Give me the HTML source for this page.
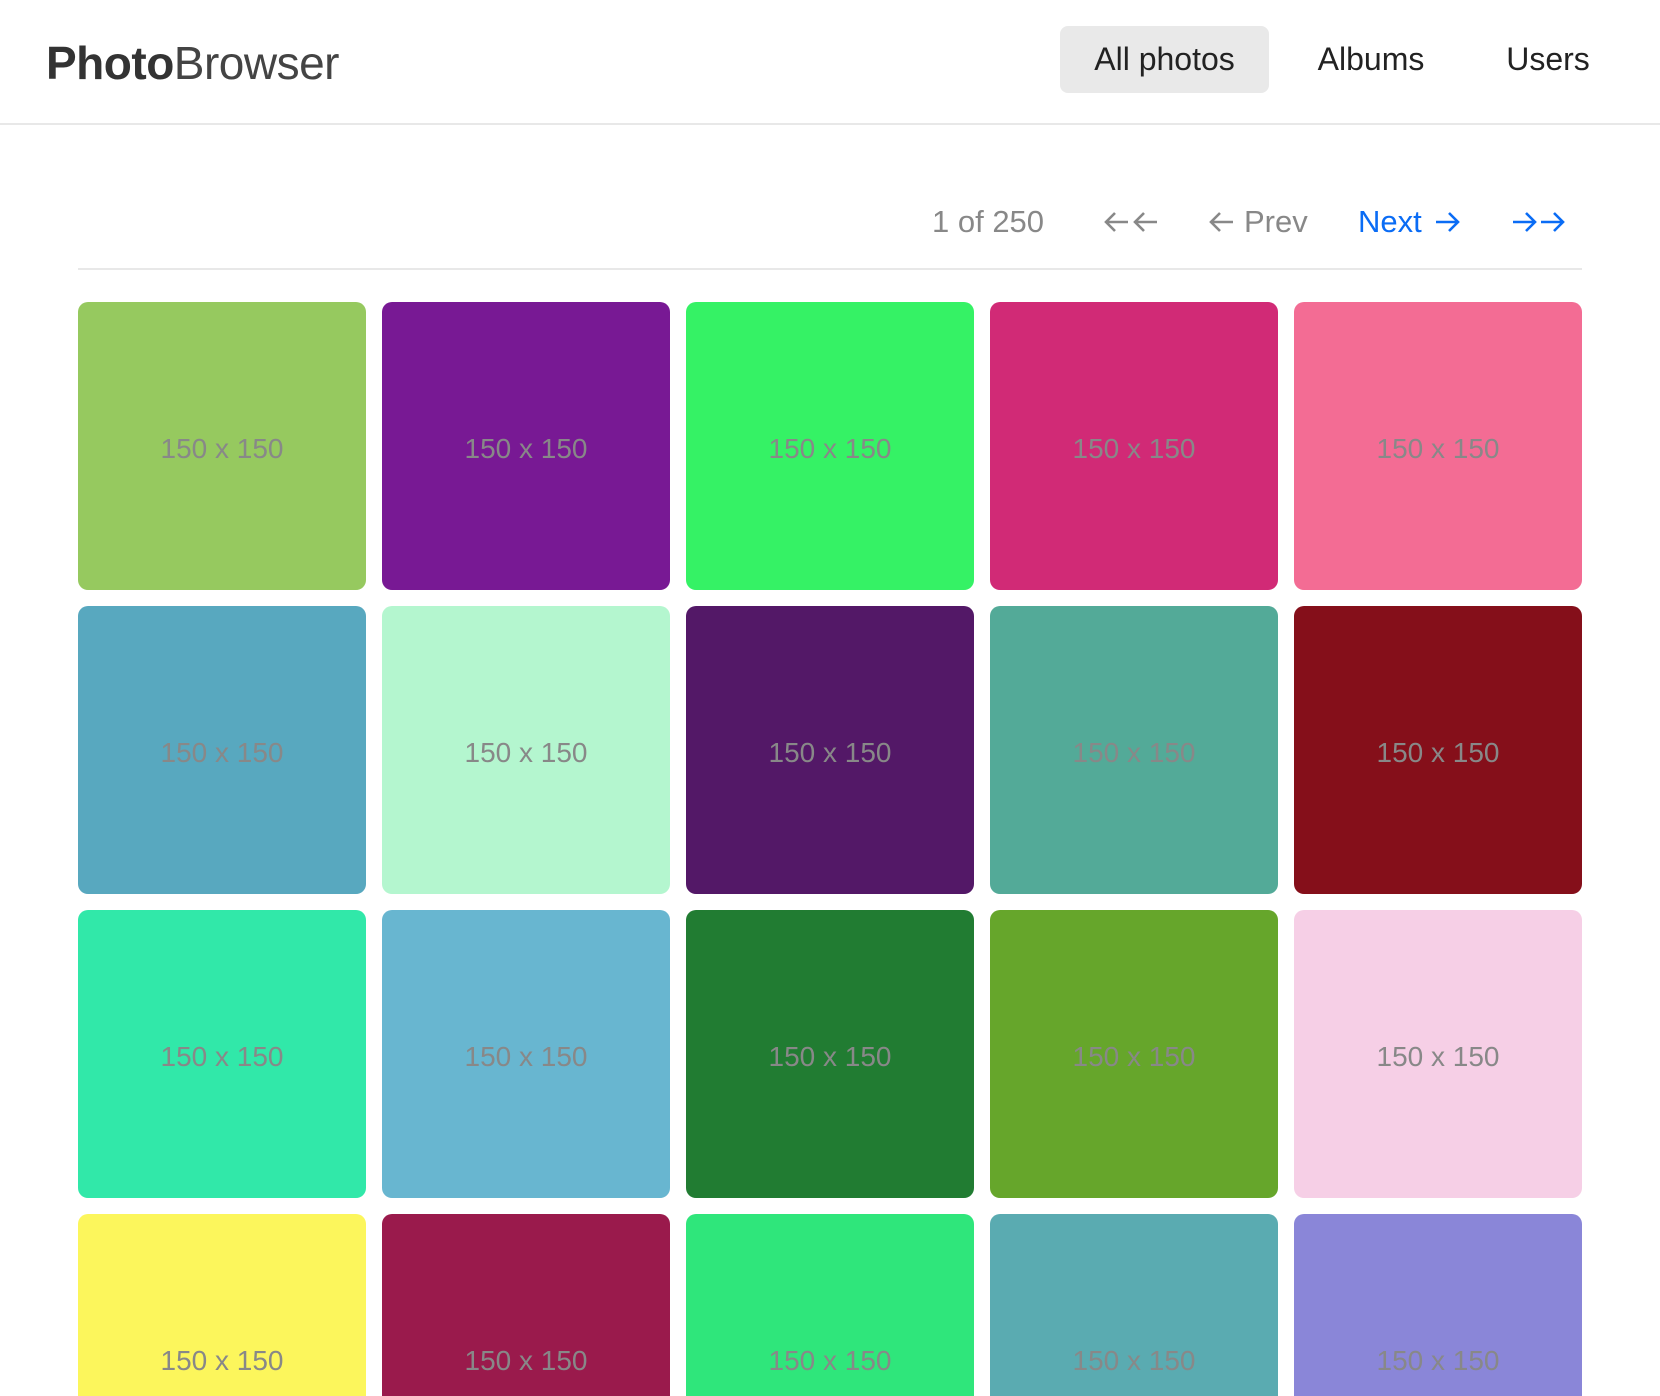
<!DOCTYPE html>
<html><head><meta charset="utf-8"><style>
*{margin:0;padding:0;box-sizing:border-box}
html,body{width:1660px;height:1396px;overflow:hidden}
body{background:#fff;font-family:"Liberation Sans",Arial,sans-serif;position:relative}
.hdr{position:absolute;left:0;top:0;width:1660px;height:125px;border-bottom:2px solid #e8e8e8}
.logo{position:absolute;left:46px;top:36px;font-size:46px;color:#333;letter-spacing:-0.5px}
.logo b{font-weight:700}
.logo span{color:#444}
.nav{position:absolute;top:26px;height:67px;line-height:67px;font-size:32px;color:#222;text-align:center}
.pg{position:absolute;top:202px;font-size:31px;line-height:40px;color:#888;white-space:nowrap}
.blue{color:#0a6cf5}
svg.a{position:absolute;top:210px;width:26px;height:24px;overflow:visible}
.div{position:absolute;left:78px;top:268px;width:1504px;height:2px;background:#e8e8e8}
.t{position:absolute;width:288px;height:288px;padding-top:6px;border-radius:10px;display:flex;align-items:center;justify-content:center;color:#888;font-size:28px}
</style></head><body>
<div class="hdr">
<div class="logo"><b>Photo</b><span>Browser</span></div>
<div class="nav" style="left:1060px;width:209px;background:#e9e9e9;border-radius:8px">All photos</div>
<div class="nav" style="left:1312px;width:118px">Albums</div>
<div class="nav" style="left:1502px;width:92px">Users</div>
</div>
<div class="pg" style="left:932px">1 of 250</div>
<svg class="a" style="left:1104px" viewBox="0 0 26 24"><path d="M24 12H2M11 3L2 12l9 9" fill="none" stroke="#888" stroke-width="2.6"/></svg>
<svg class="a" style="left:1133px" viewBox="0 0 26 24"><path d="M24 12H2M11 3L2 12l9 9" fill="none" stroke="#888" stroke-width="2.6"/></svg>
<svg class="a" style="left:1209px" viewBox="0 0 26 24"><path d="M24 12H2M11 3L2 12l9 9" fill="none" stroke="#888" stroke-width="2.6"/></svg>
<div class="pg" style="left:1244px">Prev</div>
<div class="pg blue" style="left:1358px">Next</div>
<svg class="a" style="left:1434px" viewBox="0 0 26 24"><path d="M2 12h22M15 3l9 9-9 9" fill="none" stroke="#0a6cf5" stroke-width="2.6"/></svg>
<svg class="a" style="left:1511px" viewBox="0 0 26 24"><path d="M2 12h22M15 3l9 9-9 9" fill="none" stroke="#0a6cf5" stroke-width="2.6"/></svg>
<svg class="a" style="left:1539px" viewBox="0 0 26 24"><path d="M2 12h22M15 3l9 9-9 9" fill="none" stroke="#0a6cf5" stroke-width="2.6"/></svg>
<div class="div"></div>
<div class="t" style="left:78px;top:302px;background:#96c95f">150 x 150</div>
<div class="t" style="left:382px;top:302px;background:#781994">150 x 150</div>
<div class="t" style="left:686px;top:302px;background:#35f265">150 x 150</div>
<div class="t" style="left:990px;top:302px;background:#d12a76">150 x 150</div>
<div class="t" style="left:1294px;top:302px;background:#f36c94">150 x 150</div>
<div class="t" style="left:78px;top:606px;background:#58a8bf">150 x 150</div>
<div class="t" style="left:382px;top:606px;background:#b4f6cf">150 x 150</div>
<div class="t" style="left:686px;top:606px;background:#531867">150 x 150</div>
<div class="t" style="left:990px;top:606px;background:#53aa98">150 x 150</div>
<div class="t" style="left:1294px;top:606px;background:#850f1a">150 x 150</div>
<div class="t" style="left:78px;top:910px;background:#31e8a9">150 x 150</div>
<div class="t" style="left:382px;top:910px;background:#68b6d0">150 x 150</div>
<div class="t" style="left:686px;top:910px;background:#217c32">150 x 150</div>
<div class="t" style="left:990px;top:910px;background:#66a62b">150 x 150</div>
<div class="t" style="left:1294px;top:910px;background:#f6cfe6">150 x 150</div>
<div class="t" style="left:78px;top:1214px;background:#fcf65c">150 x 150</div>
<div class="t" style="left:382px;top:1214px;background:#9a1a4c">150 x 150</div>
<div class="t" style="left:686px;top:1214px;background:#2fe67b">150 x 150</div>
<div class="t" style="left:990px;top:1214px;background:#5aabb1">150 x 150</div>
<div class="t" style="left:1294px;top:1214px;background:#8a86d8">150 x 150</div>
</body></html>
